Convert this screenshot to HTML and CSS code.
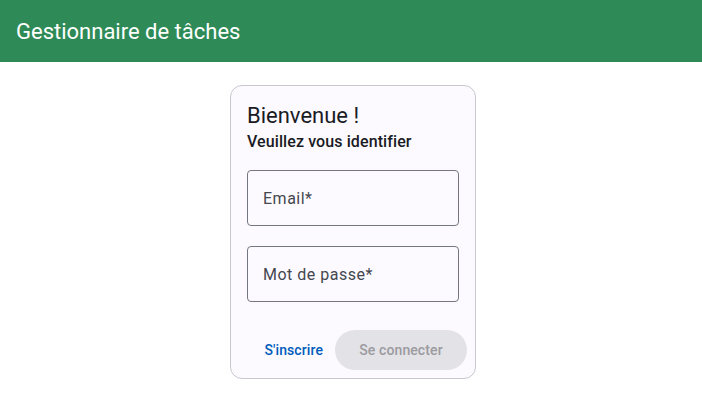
FILE: index.html
```html
<!DOCTYPE html>
<html lang="fr">
<head>
<meta charset="utf-8">
<title>Gestionnaire de tâches</title>
<link rel="stylesheet" href="styles.css">
</head>
<body>
<header class="toolbar"><span class="toolbar-title">Gestionnaire de tâches</span></header>
<main class="page">
  <section class="card">
    <div class="card-header">
      <h1 class="card-title">Bienvenue !</h1>
      <h2 class="card-subtitle">Veuillez vous identifier</h2>
    </div>
    <form class="card-content">
      <label class="field"><span class="field-label">Email*</span></label>
      <label class="field"><span class="field-label">Mot de passe*</span></label>
    </form>
    <div class="card-actions">
      <button class="btn btn-text" type="button">S'inscrire</button>
      <button class="btn btn-filled" type="button" disabled>Se connecter</button>
    </div>
  </section>
</main>
</body>
</html>
```
FILE: styles.css
```css
* { box-sizing: border-box; }
html, body { margin: 0; padding: 0; background: #ffffff; font-family: Roboto, "Liberation Sans", sans-serif; }
.toolbar {
  height: 62px;
  background: #2e8b57;
  color: #ffffff;
  display: flex;
  align-items: center;
  padding: 0 16px;
}
.toolbar-title { font-size: 22px; font-weight: 400; letter-spacing: 0; }
.page {
  display: flex;
  justify-content: center;
  padding: 23px 0 0 4px;
}
.card {
  width: 246px;
  background: #fcfaff;
  border: 1px solid #c8c7ce;
  border-radius: 12px;
  display: flex;
  flex-direction: column;
}
.card-header { padding: 16px 16px 0 16px; }
.card-title { margin: 0; font-size: 22px; line-height: 28px; font-weight: 400; color: #1a1b1f; }
.card-subtitle { margin: 0; font-size: 16px; line-height: 24px; font-weight: 500; color: #1a1b1f; letter-spacing: 0.1px; }
.card-content {
  padding: 16px 16px 0 16px;
  display: flex;
  flex-direction: column;
  gap: 20px;
  margin: 0;
}
.field {
  height: 56px;
  border: 1px solid #74777f;
  border-radius: 4px;
  display: flex;
  align-items: center;
  padding: 1px 15px 0 15px;
}
.field-label { font-size: 16px; color: #44474e; letter-spacing: 0.5px; }
.card-actions {
  display: flex;
  justify-content: flex-end;
  padding: 28px 8px 8px 8px;
}
.btn {
  height: 40px;
  border: none;
  border-radius: 20px;
  font-family: Roboto, "Liberation Sans", sans-serif;
  font-size: 14px;
  font-weight: 500;
  letter-spacing: 0.1px;
  background: transparent;
}
.btn-text { padding: 0 12px; color: #005cbb; }
.btn-filled { padding: 0 24px; width: 132px; background: #e3e2e7; color: #9b9ba0; }
```
